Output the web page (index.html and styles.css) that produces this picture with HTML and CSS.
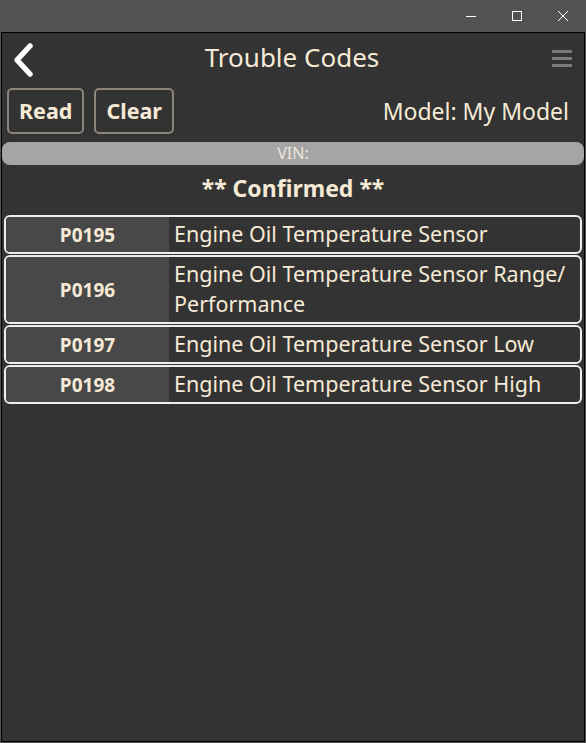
FILE: index.html
```html
<!DOCTYPE html>
<html lang="en">
<head>
    <meta charset="UTF-8">
    <meta name="viewport" content="width=device-width, initial-scale=1.0">
    <title>Trouble Codes</title>
    <link rel="stylesheet" href="styles.css">
</head>
<body>
    <div class="titlebar">
        <span class="win-btn"><svg width="12" height="12" viewBox="0 0 12 12"><path d="M1 6.5h10" stroke="#fff" stroke-width="1"/></svg></span>
        <span class="win-btn"><svg width="12" height="12" viewBox="0 0 12 12"><rect x="1.5" y="1.5" width="9" height="9" fill="none" stroke="#fff" stroke-width="1"/></svg></span>
        <span class="win-btn"><svg width="12" height="12" viewBox="0 0 12 12"><path d="M1 1l10 10M11 1L1 11" stroke="#fff" stroke-width="1"/></svg></span>
    </div>

    <div class="app">
        <div class="header">
            <svg class="back" width="26" height="36" viewBox="0 0 26 36"><path d="M20 4L7 18l13 14" fill="none" stroke="#fff" stroke-width="5.5" stroke-linecap="round" stroke-linejoin="round"/></svg>
            <h1>Trouble Codes</h1>
            <div class="menu"><span></span><span></span><span></span></div>
        </div>

        <div class="toolbar">
            <button class="btn">Read</button>
            <button class="btn">Clear</button>
            <span class="model">Model: My Model</span>
        </div>

        <div class="vin">VIN:</div>
        <h2 class="status">** Confirmed **</h2>

        <div class="codes">
            <div class="code-row"><div class="code">P0195</div><div class="desc">Engine Oil Temperature Sensor</div></div>
            <div class="code-row"><div class="code">P0196</div><div class="desc">Engine Oil Temperature Sensor Range/ Performance</div></div>
            <div class="code-row"><div class="code">P0197</div><div class="desc">Engine Oil Temperature Sensor Low</div></div>
            <div class="code-row"><div class="code">P0198</div><div class="desc">Engine Oil Temperature Sensor High</div></div>
        </div>
    </div>
</body>
</html>
```

FILE: styles.css
```css
html, body {
    margin: 0;
    height: 100%;
}
body {
    background-color: #535353;
    font-family: "Noto Sans", "Open Sans", sans-serif;
    color: #f6ead6;
    overflow: hidden;
}
.titlebar {
    height: 32px;
    display: flex;
    justify-content: flex-end;
    align-items: center;
}
.win-btn {
    width: 46px;
    height: 32px;
    display: flex;
    align-items: center;
    justify-content: center;
}
.app {
    margin: 0 1px;
    height: 708px;
    border: 1px solid #000;
    background-color: #333333;
}
.header {
    height: 52px;
    display: flex;
    align-items: center;
    justify-content: space-between;
    padding: 0 12px 0 8px;
}
.back {
    margin-top: 2px;
}
.header h1 {
    margin: 0 0 3px 0;
    font-size: 26px;
    font-weight: normal;
    line-height: 49px;
    padding-right: 4px;
}
.menu {
    width: 20px;
    display: flex;
    flex-direction: column;
    gap: 4px;
    margin-bottom: 2px;
}
.menu span {
    height: 3px;
    background-color: #7a7a7a;
}
.toolbar {
    display: flex;
    align-items: center;
    padding: 3px 15px 0 5px;
    height: 45px;
    gap: 10px;
}
.btn {
    height: 46px;
    padding: 0 10px;
    background-color: #333;
    border: 2px solid #8d847a;
    border-radius: 5px;
    color: #f6ead6;
    font-family: inherit;
    font-size: 21.5px;
    font-weight: bold;
}
.model {
    margin-left: auto;
    font-size: 23px;
}
.vin {
    margin-top: 9px;
    height: 23px;
    line-height: 23px;
    background-color: #a5a5a5;
    border-radius: 8px;
    text-align: center;
    font-size: 16px;
    color: #ece6dc;
}
.status {
    margin: 0;
    height: 50px;
    line-height: 46px;
    text-align: center;
    font-size: 23px;
    font-weight: bold;
}
.codes {
    padding: 0 2px 0 2px;
    display: flex;
    flex-direction: column;
    gap: 1px;
}
.code-row {
    display: flex;
    border: 2px solid #eeeeee;
    border-radius: 6px;
    overflow: hidden;
}
.code {
    width: 163px;
    flex: none;
    background-color: #484848;
    display: flex;
    align-items: center;
    justify-content: center;
    font-size: 19px;
    font-weight: bold;
}
.desc {
    padding: 2px 6px 3px 5px;
    font-size: 21.5px;
    line-height: 30px;
}
```
